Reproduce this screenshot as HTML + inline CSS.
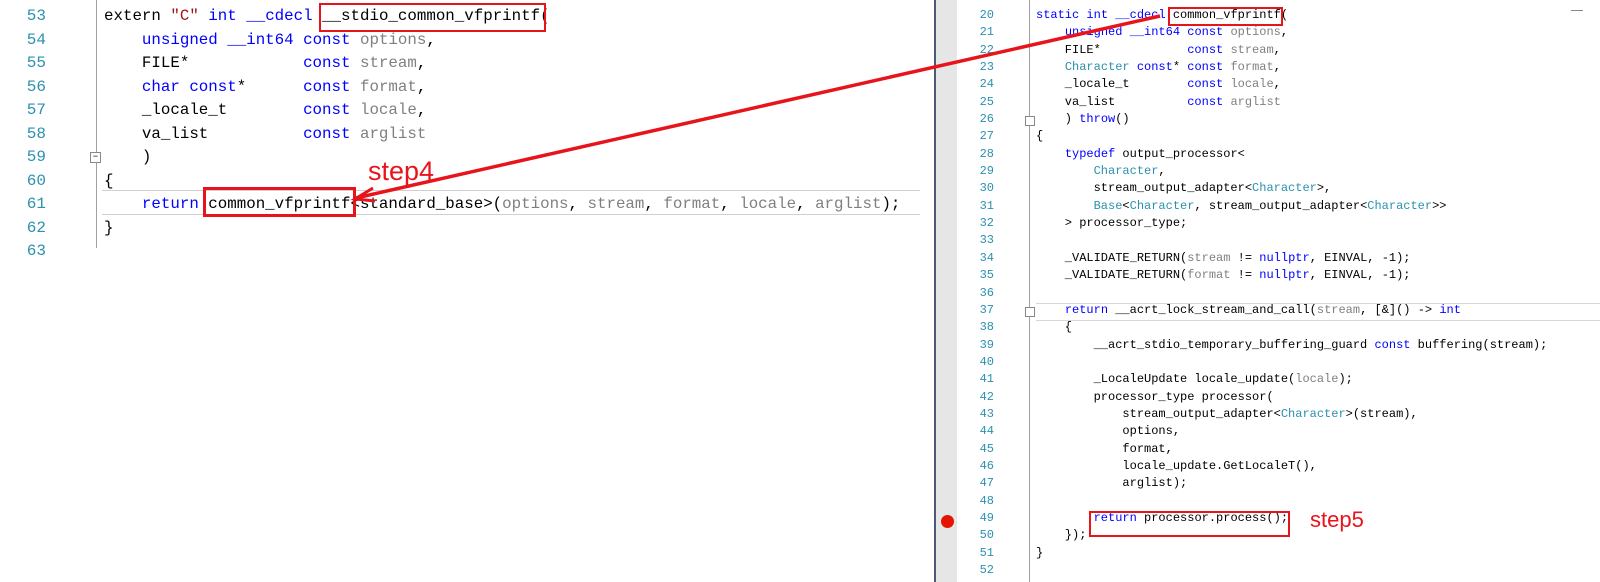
<!DOCTYPE html>
<html><head><meta charset="utf-8"><style>
body{margin:0;width:1600px;height:582px;background:#fff;position:relative;overflow:hidden;font-family:"Liberation Mono",monospace}
.L{position:absolute;left:104px;top:5px;font-size:15.8px;line-height:23.5px;white-space:pre;color:#000}
.LN{position:absolute;left:0;width:46px;top:5px;font-size:16px;line-height:23.5px;text-align:right;color:#2b91af;white-space:pre}
.R{position:absolute;left:1036px;top:7px;font-size:12px;line-height:17.35px;white-space:pre;color:#000}
.RN{position:absolute;left:950px;width:44px;top:7px;font-size:12px;line-height:17.35px;text-align:right;color:#2b91af;white-space:pre}
.k{color:#0000ff}.p{color:#808080}.t{color:#2b91af}.s{color:#a31515}
.box{position:absolute;border:2px solid #e8141c}
.step{position:absolute;color:#e8141c;font-family:"Liberation Sans",sans-serif}
</style></head><body>
<div style="position:absolute;left:96px;top:0;width:1px;height:248px;background:#a0a0a0"></div>
<div style="position:absolute;left:90px;top:152px;width:9px;height:9px;border:1px solid #888;background:#fff;font-size:9px;line-height:9px;text-align:center">−</div>
<div style="position:absolute;left:102px;top:190px;width:818px;height:23px;border-top:1px solid #d0d0d0;border-bottom:1px solid #d0d0d0"></div>
<div class="LN">53
54
55
56
57
58
59
60
61
62
63</div>
<div class="L">extern <span class="s">"C"</span> <span class="k">int</span> <span class="k">__cdecl</span> __stdio_common_vfprintf(
    <span class="k">unsigned</span> <span class="k">__int64</span> <span class="k">const</span> <span class="p">options</span>,
    FILE*            <span class="k">const</span> <span class="p">stream</span>,
    <span class="k">char</span> <span class="k">const</span>*      <span class="k">const</span> <span class="p">format</span>,
    _locale_t        <span class="k">const</span> <span class="p">locale</span>,
    va_list          <span class="k">const</span> <span class="p">arglist</span>
    )
{
    <span class="k">return</span> common_vfprintf&lt;standard_base&gt;(<span class="p">options</span>, <span class="p">stream</span>, <span class="p">format</span>, <span class="p">locale</span>, <span class="p">arglist</span>);
}</div>
<div class="box" style="left:319px;top:3px;width:223px;height:25px"></div>
<div class="box" style="left:203px;top:187px;width:147px;height:24px;border-width:3px"></div>
<div class="step" style="left:368px;top:156px;font-size:27px">step4</div>

<div style="position:absolute;left:934px;top:0;width:2px;height:582px;background:#4a5a78"></div>
<div style="position:absolute;left:936px;top:0;width:21px;height:582px;background:#e6e6e6"></div>
<div style="position:absolute;left:1029px;top:0;width:1px;height:582px;background:#a0a0a0"></div>
<div style="position:absolute;left:1025px;top:116px;width:8px;height:8px;border:1px solid #888;background:#fff"></div>
<div style="position:absolute;left:1025px;top:307px;width:8px;height:8px;border:1px solid #888;background:#fff"></div>
<div style="position:absolute;left:1036px;top:303px;width:564px;height:16px;border-top:1px solid #d8d8d8;border-bottom:1px solid #d8d8d8"></div>
<div style="position:absolute;left:941px;top:515px;width:13px;height:13px;border-radius:50%;background:#e51400"></div>
<div class="RN">20
21
22
23
24
25
26
27
28
29
30
31
32
33
34
35
36
37
38
39
40
41
42
43
44
45
46
47
48
49
50
51
52</div>
<div class="R"><span class="k">static</span> <span class="k">int</span> <span class="k">__cdecl</span> common_vfprintf(
    <span class="k">unsigned</span> <span class="k">__int64</span> <span class="k">const</span> <span class="p">options</span>,
    FILE*            <span class="k">const</span> <span class="p">stream</span>,
    <span class="t">Character</span> <span class="k">const</span>* <span class="k">const</span> <span class="p">format</span>,
    _locale_t        <span class="k">const</span> <span class="p">locale</span>,
    va_list          <span class="k">const</span> <span class="p">arglist</span>
    ) <span class="k">throw</span>()
{
    <span class="k">typedef</span> output_processor&lt;
        <span class="t">Character</span>,
        stream_output_adapter&lt;<span class="t">Character</span>&gt;,
        <span class="t">Base</span>&lt;<span class="t">Character</span>, stream_output_adapter&lt;<span class="t">Character</span>&gt;&gt;
    &gt; processor_type;

    _VALIDATE_RETURN(<span class="p">stream</span> != <span class="k">nullptr</span>, EINVAL, -1);
    _VALIDATE_RETURN(<span class="p">format</span> != <span class="k">nullptr</span>, EINVAL, -1);

    <span class="k">return</span> __acrt_lock_stream_and_call(<span class="p">stream</span>, [&amp;]() -&gt; <span class="k">int</span>
    {
        __acrt_stdio_temporary_buffering_guard <span class="k">const</span> buffering(stream);

        _LocaleUpdate locale_update(<span class="p">locale</span>);
        processor_type processor(
            stream_output_adapter&lt;<span class="t">Character</span>&gt;(stream),
            options,
            format,
            locale_update.GetLocaleT(),
            arglist);

        <span class="k">return</span> processor.process();
    });
}</div>
<div class="box" style="left:1168px;top:7px;width:111px;height:15px"></div>
<div class="box" style="left:1089px;top:511px;width:197px;height:22px"></div>
<div class="step" style="left:1310px;top:507px;font-size:22px">step5</div>
<div style="position:absolute;left:1571px;top:10px;width:12px;height:1px;background:#888"></div>

<svg style="position:absolute;left:0;top:0" width="1600" height="582">
<line x1="356" y1="198" x2="1160" y2="16" stroke="#e8141c" stroke-width="3.5"/>
<polyline points="373,188 355,199 375,201" fill="none" stroke="#e8141c" stroke-width="3"/>
</svg>
</body></html>
